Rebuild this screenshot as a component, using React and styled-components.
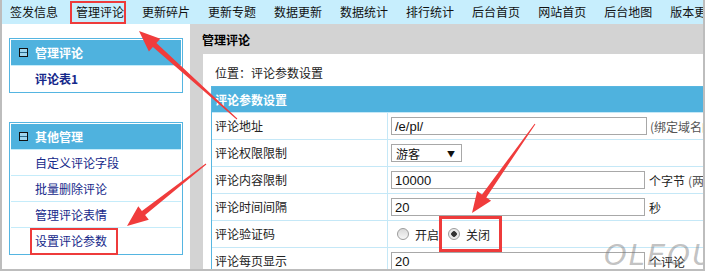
import React from "react"
import styled, { createGlobalStyle, css } from "styled-components"

const navItems = [
  "签发信息",
  "管理评论",
  "更新碎片",
  "更新专题",
  "数据更新",
  "数据统计",
  "排行统计",
  "后台首页",
  "网站首页",
  "后台地图",
  "版本更新",
]

const otherLinks = ["自定义评论字段", "批量删除评论", "管理评论表情", "设置评论参数"]

// arrow polygon: thin tail widening into a solid head at the tip
function arrowPoints(x1, y1, x2, y2) {
  const dx = x2 - x1
  const dy = y2 - y1
  const len = Math.hypot(dx, dy)
  const ux = dx / len
  const uy = dy / len
  const px = -uy
  const py = ux
  const headLen = 21
  const headW = 8.5
  const neckW = 2.6
  const tailW = 0.5
  const nx = x2 - ux * headLen
  const ny = y2 - uy * headLen
  const pts = [
    [x1 + px * tailW, y1 + py * tailW],
    [nx + px * neckW, ny + py * neckW],
    [nx + px * headW, ny + py * headW],
    [x2, y2],
    [nx - px * headW, ny - py * headW],
    [nx - px * neckW, ny - py * neckW],
    [x1 - px * tailW, y1 - py * tailW],
  ]
  return pts.map(([x, y]) => `${x.toFixed(1)},${y.toFixed(1)}`).join(" ")
}

export default function App() {
  return (
    <Frame>
      <GlobalStyle />
      <Nav>
        {navItems.map((item) => (
          <NavItem key={item} $marked={item === "管理评论"}>
            {item}
          </NavItem>
        ))}
      </Nav>
      <Body>
        <Sidebar>
          <MenuBox>
            <MenuHead>
              <FoldIcon />
              管理评论
            </MenuHead>
            <MenuItem $bold>评论表1</MenuItem>
          </MenuBox>
          <MenuBox>
            <MenuHead>
              <FoldIcon />
              其他管理
            </MenuHead>
            {otherLinks.map((link) => (
              <MenuItem key={link} $marked={link === "设置评论参数"}>
                {link}
              </MenuItem>
            ))}
          </MenuBox>
        </Sidebar>
        <Main>
          <Title>管理评论</Title>
          <Panel>
            <Crumb>位置：评论参数设置</Crumb>
            <Table>
              <TableHead>评论参数设置</TableHead>
              <Row>
                <Label>评论地址</Label>
                <Value>
                  <TextInput readOnly value="/e/pl/" />
                  <Hint>(绑定域名的话，请填写完整地址)</Hint>
                </Value>
              </Row>
              <Row>
                <Label>评论权限限制</Label>
                <Value>
                  <Select>
                    游客<Caret>▼</Caret>
                  </Select>
                </Value>
              </Row>
              <Row>
                <Label>评论内容限制</Label>
                <Value>
                  <TextInput readOnly value="10000" $w={254} />
                  <Unit>个字节</Unit>
                  <Hint>(两个字节为一个汉字)</Hint>
                </Value>
              </Row>
              <Row>
                <Label>评论时间间隔</Label>
                <Value>
                  <TextInput readOnly value="20" $w={254} />
                  <Unit>秒</Unit>
                </Value>
              </Row>
              <Row>
                <Label>评论验证码</Label>
                <Value>
                  <RadioGroup>
                    <Radio />
                    开启
                  </RadioGroup>
                  <RadioGroup $marked>
                    <Radio $checked />
                    关闭
                  </RadioGroup>
                </Value>
              </Row>
              <Row>
                <Label>评论每页显示</Label>
                <Value>
                  <TextInput readOnly value="20" $w={254} />
                  <Unit>个评论</Unit>
                </Value>
              </Row>
            </Table>
          </Panel>
        </Main>
      </Body>
      <Watermark>OLEOU</Watermark>
      <Arrows viewBox="0 0 705 271" width="705" height="271">
        <polygon points={arrowPoints(237, 119, 139, 31)} />
        <polygon points={arrowPoints(206, 164, 127, 226)} />
        <polygon points={arrowPoints(535, 124, 472, 213)} />
      </Arrows>
    </Frame>
  )
}

const GlobalStyle = createGlobalStyle`
  body {
    margin: 0;
    overflow: hidden;
    font-family: "Noto Sans CJK SC", "Liberation Sans", sans-serif;
    font-size: 12px;
    color: #222;
  }
`

const redBox = css`
  position: relative;
  &::after {
    content: "";
    position: absolute;
    border: 2px solid #ee3b3b;
    pointer-events: none;
  }
`

const Frame = styled.div`
  position: relative;
  width: 705px;
  height: 271px;
  box-sizing: border-box;
  border-left: 2px solid #bdbdbd;
  border-right: 2px solid #bdbdbd;
  border-bottom: 2px solid #bdbdbd;
  background: #d3d3d3;
  display: flex;
  flex-direction: column;
  overflow: hidden;
`

const Nav = styled.div`
  height: 24px;
  flex: none;
  display: flex;
  white-space: nowrap;
  overflow: hidden;
  background: #c7eefd;
  margin-left: -1px;
`

const NavItem = styled.div`
  padding: 0 9px;
  line-height: 24px;
  font-size: 12px;
  color: #111;
  flex: none;
  ${(p) =>
    p.$marked &&
    css`
      ${redBox}
      &::after {
        left: 3px;
        width: 52px;
        top: 1px;
        bottom: 0;
      }
    `}
`

const Body = styled.div`
  flex: 1;
  display: flex;
  min-height: 0;
`

const Sidebar = styled.div`
  width: 188px;
  flex: none;
  background: #fff;
  padding: 14px 7px 0;
  box-sizing: border-box;
  display: flex;
  flex-direction: column;
  gap: 29px;
`

const MenuBox = styled.div`
  border: 1px solid #55b5e1;
  padding: 1px;
  background: #fff;
`

const MenuHead = styled.div`
  height: 25px;
  display: flex;
  align-items: center;
  gap: 7px;
  padding-left: 8px;
  background: #4fb2de;
  color: #fff;
  font-weight: bold;
  font-size: 12px;
`

const FoldIcon = styled.span`
  width: 7px;
  height: 7px;
  border: 1px solid #111;
  background: linear-gradient(
    #9fd6ef 0,
    #9fd6ef 3px,
    #2b6b8c 3px,
    #2b6b8c 4px,
    #9fd6ef 4px
  );
`

const MenuItem = styled.div`
  height: 25px;
  line-height: 25px;
  padding-left: 24px;
  border-top: 1px solid #c5ecfa;
  color: #15288a;
  font-size: 12px;
  font-weight: ${(p) => (p.$bold ? "bold" : "normal")};
  ${(p) =>
    p.$marked &&
    css`
      ${redBox}
      &::after {
        left: 19px;
        width: 84px;
        top: 0;
        bottom: -2px;
      }
    `}
`

const Main = styled.div`
  flex: 1;
  display: flex;
  flex-direction: column;
  padding: 5px 0 0 12px;
  min-width: 0;
`

const Title = styled.div`
  line-height: 22px;
  margin-bottom: 3px;
  font-weight: bold;
  font-size: 12px;
  color: #000;
`

const Panel = styled.div`
  flex: 1;
  margin-left: 1px;
  background: #fff;
  padding: 9px 0 0 8px;
  overflow: hidden;
`

const Crumb = styled.div`
  line-height: 20px;
  margin-bottom: 3px;
  padding-left: 4px;
  color: #222;
`

const Table = styled.div`
  width: 620px;
  border: 1px solid #58b6e0;
`

const TableHead = styled.div`
  height: 25px;
  line-height: 25px;
  padding-left: 3px;
  background: #4fb2de;
  color: #fff;
  font-weight: bold;
`

const Row = styled.div`
  display: grid;
  grid-template-columns: 176px 1fr;
  height: 26px;
  border-top: 1px solid #c5e8f7;
`

const Label = styled.div`
  box-sizing: border-box;
  border-right: 1px solid #c5e8f7;
  padding-left: 3px;
  line-height: 26px;
  color: #222;
`

const Value = styled.div`
  display: flex;
  align-items: center;
  padding-left: 3px;
  white-space: nowrap;
`

const TextInput = styled.input`
  box-sizing: border-box;
  width: ${(p) => p.$w || 256}px;
  height: 18px;
  border: 1px solid #a8a8a8;
  padding: 0 3px;
  margin: 0;
  font-family: "Liberation Sans", sans-serif;
  font-size: 13px;
  color: #111;
  outline: none;
`

const Unit = styled.span`
  margin-left: 4px;
  color: #222;
`

const Hint = styled.span`
  margin-left: 3px;
  color: #555;
`

const Select = styled.div`
  box-sizing: border-box;
  width: 71px;
  height: 18px;
  border: 1px solid #a8a8a8;
  display: flex;
  align-items: center;
  justify-content: space-between;
  padding: 0 6px 0 4px;
  color: #111;
`

const Caret = styled.span`
  font-size: 8px;
  color: #111;
`

const RadioGroup = styled.span`
  display: flex;
  align-items: center;
  gap: 6px;
  margin-left: ${(p) => (p.$marked ? "9px" : "6px")};
  color: #222;
  ${(p) =>
    p.$marked &&
    css`
      ${redBox}
      &::after {
        left: -9px;
        right: -12px;
        top: -10px;
        bottom: -9px;
        border-width: 3px;
      }
    `}
`

const Radio = styled.span`
  box-sizing: border-box;
  width: 12px;
  height: 12px;
  border-radius: 50%;
  border: 1px solid #9c9c9c;
  background: ${(p) =>
    p.$checked
      ? "radial-gradient(circle, #333 0, #333 2.5px, #e6e6e6 3px, #f4f4f4 100%)"
      : "linear-gradient(#d9d9d9, #f7f7f7)"};
`

const Watermark = styled.div`
  position: absolute;
  left: 602px;
  top: 238px;
  font-family: "DejaVu Sans", sans-serif;
  font-style: italic;
  font-size: 29px;
  letter-spacing: 2px;
  color: rgba(120, 120, 120, 0.45);
  pointer-events: none;
`

const Arrows = styled.svg`
  position: absolute;
  left: -2px;
  top: 0;
  pointer-events: none;
  fill: #f03c3c;
`
